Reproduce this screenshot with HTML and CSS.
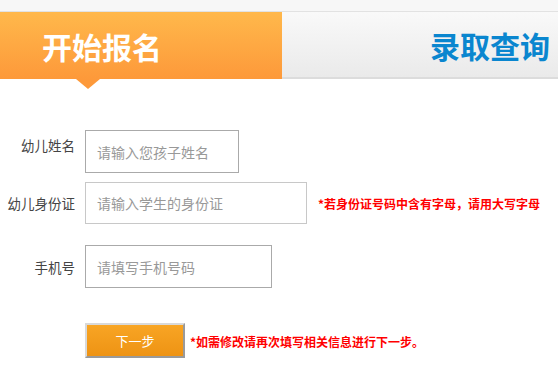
FILE: index.html
```html
<!DOCTYPE html>
<html lang="zh">
<head>
    <meta charset="UTF-8">
    <title>开始报名</title>
    <link rel="stylesheet" href="styles.css">
</head>
<body>

    <div class="top-strip"></div>
    <div class="tabs">
        <div class="tab tab-active">开始报名</div>
        <div class="tab tab-query">录取查询</div>
    </div>

    <form class="signup">
        <div class="row row-name">
            <label for="name">幼儿姓名</label>
            <input id="name" class="field field-name" type="text" placeholder="请输入您孩子姓名">
        </div>
        <div class="row row-id">
            <label for="idcard">幼儿身份证</label>
            <input id="idcard" class="field field-id" type="text" placeholder="请输入学生的身份证">
            <span class="note">*若身份证号码中含有字母，请用大写字母</span>
        </div>
        <div class="row row-phone">
            <label for="phone">手机号</label>
            <input id="phone" class="field field-phone" type="text" placeholder="请填写手机号码">
        </div>
        <div class="row row-submit">
            <span class="spacer"></span>
            <button type="button" class="next">下一步</button>
            <span class="note note-submit">*如需修改请再次填写相关信息进行下一步。</span>
        </div>
    </form>

</body>
</html>
```

FILE: styles.css
```css
body {
    margin: 0;
    font-family: "Microsoft YaHei", "Noto Sans CJK SC", sans-serif;
    background-color: #fff;
    color: #333;
}
.top-strip {
    height: 11px;
    background-color: #f7f7f7;
}
.tabs {
    display: flex;
    height: 68px;
    border-top: 1px solid #e2e2e2;
    box-sizing: border-box;
}
.tab {
    display: flex;
    align-items: center;
    font-size: 30px;
    font-weight: bold;
}
.tab-active {
    position: relative;
    width: 282px;
    padding-left: 42px;
    box-sizing: border-box;
    color: #fff;
    background: linear-gradient(#ffb84b, #fd993a);
}
.tab-active::after {
    content: "";
    position: absolute;
    left: 76px;
    top: 100%;
    border-left: 12px solid transparent;
    border-right: 12px solid transparent;
    border-top: 10px solid #fd993a;
}
.tab-query {
    flex: 1;
    justify-content: flex-end;
    padding-right: 8px;
    color: #0a86cf;
    background: linear-gradient(#f9f9f9, #eaeaea);
    border-bottom: 2px solid #dcdcdc;
}
.signup {
    padding-top: 51px;
}
.row {
    display: flex;
    align-items: center;
}
.row label,
.spacer {
    width: 75px;
    margin-right: 10px;
    text-align: right;
    font-size: 13.5px;
    color: #444;
    flex-shrink: 0;
}
.row-name label {
    margin-top: -13px;
}
.field {
    height: 43px;
    padding: 0 11px;
    box-sizing: border-box;
    border: 1px solid #aaa;
    font-family: inherit;
    font-size: 14px;
    color: #333;
    outline: none;
}
.field::placeholder {
    color: #999;
}
.field-name {
    width: 154px;
}
.row-id {
    margin-top: 9px;
}
.field-id {
    width: 222px;
    height: 42px;
    border-color: #c8c8c8;
}
.row-phone {
    margin-top: 21px;
}
.field-phone {
    width: 187px;
}
.note {
    margin-left: 11px;
    font-size: 12px;
    font-weight: bold;
    color: #f00;
}
.row-submit {
    margin-top: 35px;
}
.next {
    width: 100px;
    height: 35px;
    border: 2px solid;
    border-color: #d9d9d9 #9a9a9a #9a9a9a #d9d9d9;
    background: linear-gradient(#f8a524, #ee9314);
    color: #fff;
    font-family: inherit;
    font-size: 13px;
    padding: 0;
    cursor: pointer;
}
.note-submit {
    margin-left: 5px;
    margin-top: 2px;
}
```
